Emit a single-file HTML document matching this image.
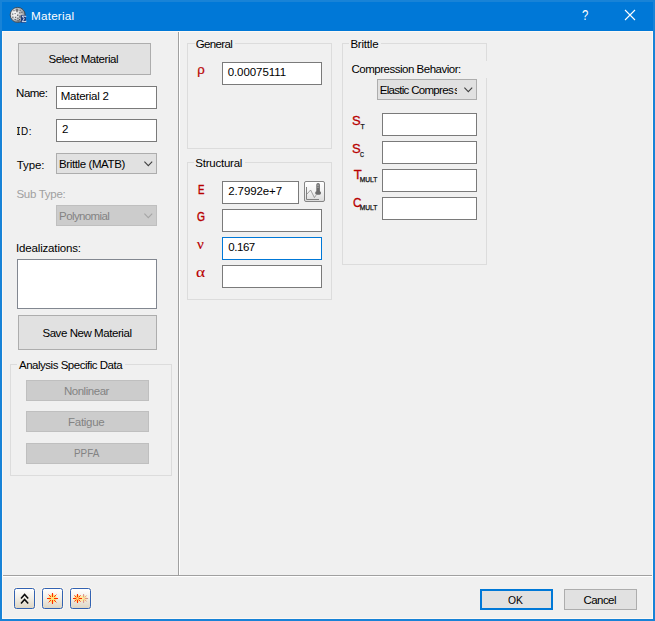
<!DOCTYPE html>
<html><head><meta charset="utf-8">
<style>
*{box-sizing:border-box;margin:0;padding:0}
html,body{width:655px;height:621px;overflow:hidden;background:#f0f0f0}
body{font-family:"Liberation Sans",sans-serif;font-size:11px;color:#000;position:relative}
.abs{position:absolute}
.tx{position:absolute;white-space:nowrap;line-height:14px;font-size:11px}
.btn{position:absolute;background:#e1e1e1;border:1px solid #adadad}
.btn.dis{background:#cccccc;border:1px solid #bfbfbf}
.inp{position:absolute;background:#fff;border:1px solid #7a7a7a}
.grp{position:absolute;border:1px solid #dcdcdc}
.red{color:#b80000}
.ib{position:absolute;width:21px;height:21px;border:1px solid #3262b2;border-radius:2.5px;background:linear-gradient(#ffffff 0%,#f3f0e9 45%,#ded6c4 100%);box-shadow:0 0 0 1px rgba(255,248,236,.7)}
</style></head><body>
<!-- window frame -->
<div class="abs" style="left:0;top:0;width:655px;height:621px;background:#1883d7"></div>
<div class="abs" style="left:2px;top:2px;width:651px;height:29px;background:#0078d7"></div>
<div class="abs" style="left:2px;top:31px;width:651px;height:588px;background:#fcf8f4"></div>
<div class="abs" style="left:3px;top:32px;width:649px;height:586px;background:#f0f0f0"></div>

<!-- title icon -->
<svg class="abs" style="left:9px;top:6px" width="19" height="19" viewBox="0 0 19 19">
 <defs><radialGradient id="sg" cx="30%" cy="42%" r="75%"><stop offset="0" stop-color="#ffffff"/><stop offset=".45" stop-color="#d4d6d8"/><stop offset=".8" stop-color="#9a9ea4"/><stop offset="1" stop-color="#50565e"/></radialGradient></defs>
 <circle cx="8.7" cy="8.9" r="7.5" fill="url(#sg)" stroke="#3c4650" stroke-width=".9"/>
 <g fill="#3c4046" opacity=".85">
  <rect x="7.4" y="2.6" width="1.2" height="3.6"/><rect x="6.4" y="3.6" width="3.2" height=".8"/>
  <rect x="4.4" y="4.2" width="1.2" height="1"/><rect x="10.6" y="3.8" width="1" height="1.4"/>
  <rect x="3" y="7.6" width="1.4" height="1"/><rect x="5.6" y="7" width="1" height="1.2"/>
  <rect x="10" y="6.4" width="1.6" height="1"/><rect x="12.4" y="5.6" width="1" height="1.4"/>
  <rect x="8" y="8.6" width="1.4" height="1.2"/><rect x="10.4" y="9.4" width="1.2" height="2.4"/>
  <rect x="3.4" y="10.6" width="1" height="1.6"/><rect x="6" y="10.8" width="1.2" height="1"/>
  <rect x="8.4" y="11.6" width="1" height="1.6"/><rect x="5.4" y="13.2" width="1.8" height="1"/>
  <rect x="7.6" y="14.4" width="2.4" height="1"/><rect x="10" y="13" width="1" height="1.4"/>
 </g>
 <rect x="11.9" y="9.2" width="5.1" height="7.5" fill="#1f3c7c"/>
 <path d="M13.2 10.2h3.6l0 .9M13.2 10.2l2 2.6-2 2.8h3.8l0-.9" fill="none" stroke="#eef4ff" stroke-width=".9"/>
</svg>
<!-- ? and X -->
<div class="tx" style="left:581.6px;top:6px;line-height:18px;font-size:14.2px;color:#fff;transform:scaleX(.8);transform-origin:0 0">?</div>
<svg class="abs" style="left:624px;top:9px" width="12" height="12" viewBox="0 0 12 12"><path d="M1 1l10 10M11 1L1 11" stroke="#fff" stroke-width="1.1" fill="none"/></svg>

<!-- separators -->
<div class="abs" style="left:178px;top:32px;width:1px;height:543px;background:#a0a0a0"></div>
<div class="abs" style="left:179px;top:32px;width:1px;height:543px;background:#ffffff"></div>
<div class="abs" style="left:3px;top:575px;width:649px;height:1px;background:#a0a0a0"></div>
<div class="abs" style="left:3px;top:576px;width:649px;height:1px;background:#ffffff"></div>

<!-- left panel -->
<div class="btn" style="left:18px;top:43px;width:133px;height:32px"></div>
<div class="inp" style="left:56px;top:86px;width:101px;height:23px"></div>
<div class="inp" style="left:56px;top:119px;width:101px;height:23px"></div>
<div class="btn" style="left:56px;top:153px;width:101px;height:21px"></div>
<svg class="abs" style="left:143px;top:160px" width="11" height="8" viewBox="0 0 11 8"><path d="M1.4 1.7l3.9 3.9 3.9-3.9" stroke="#404040" stroke-width="1.1" fill="none"/></svg>
<div class="btn dis" style="left:56px;top:205px;width:101px;height:21px"></div>
<svg class="abs" style="left:143px;top:212px" width="11" height="8" viewBox="0 0 11 8"><path d="M1.4 1.7l3.9 3.9 3.9-3.9" stroke="#a6a6a6" stroke-width="1.1" fill="none"/></svg>
<div class="inp" style="left:17px;top:259px;width:140px;height:50px;border-color:#828790"></div>
<div class="btn" style="left:18px;top:315px;width:139px;height:35px"></div>

<div class="grp" style="left:10px;top:364px;width:162px;height:112px"></div>
<div class="btn dis" style="left:26px;top:380px;width:123px;height:21px"></div>
<div class="btn dis" style="left:26px;top:411px;width:123px;height:21px"></div>
<div class="btn dis" style="left:26px;top:443px;width:123px;height:21px"></div>

<!-- General -->
<div class="grp" style="left:187px;top:43px;width:145px;height:106px"></div>
<div class="tx red" style="left:197.3px;top:61.6px;font-size:13.2px;line-height:16px;-webkit-text-stroke:0.2px #b80000">ρ</div>
<div class="inp" style="left:222px;top:62px;width:100px;height:23px"></div>

<!-- Structural -->
<div class="grp" style="left:187px;top:162px;width:145px;height:138px"></div>
<div class="tx red" style="left:197.9px;top:183px;font-size:12px;line-height:14px;-webkit-text-stroke:0.45px #b80000;transform:scaleX(.8);transform-origin:0 0">E</div>
<div class="inp" style="left:222px;top:181px;width:77px;height:23px"></div>
<div class="tx red" style="left:197.4px;top:210.4px;font-size:12px;line-height:14px;-webkit-text-stroke:0.45px #b80000;transform:scaleX(.85);transform-origin:0 0">G</div>
<div class="inp" style="left:222px;top:209px;width:100px;height:23px"></div>
<div class="tx red" style="left:197.1px;top:236px;font-size:15px;line-height:16px;font-family:'Liberation Serif',serif;-webkit-text-stroke:0.2px #b80000">ν</div>
<div class="inp" style="left:222px;top:237px;width:100px;height:23px;border-color:#0078d7"></div>
<div class="tx red" style="left:196.4px;top:264px;font-size:15px;line-height:16px;font-family:'Liberation Serif',serif;-webkit-text-stroke:0.12px #b80000;transform:scaleX(1.15);transform-origin:0 0">α</div>
<div class="inp" style="left:222px;top:265px;width:100px;height:23px"></div>
<!-- graph/thermo button -->
<div class="abs" style="left:304px;top:181px;width:21px;height:21px;border:1px solid #858585;border-radius:2px;background:linear-gradient(#ffffff,#f2f2f2 50%,#dcdcdc)"></div>
<svg class="abs" style="left:304px;top:181px" width="21" height="21" viewBox="0 0 21 21">
 <path d="M2.5 6v12.5h12.5" stroke="#808080" stroke-width="1" fill="none"/>
 <path d="M3 13l3.6-4 3.8 7.6 1.6-2.4" stroke="#8a8a8a" stroke-width=".8" fill="none"/>
 <rect x="12.3" y="2.1" width="3.6" height="10.5" rx="1.7" fill="#6c6c6c"/>
 <ellipse cx="14.1" cy="11.9" rx="2.9" ry="1.9" fill="#6c6c6c"/>
 <rect x="13.5" y="3.5" width="1" height="1.4" fill="#cfcfcf"/><rect x="13.5" y="5.6" width="1" height="1.4" fill="#b4b4b4"/>
</svg>

<!-- Brittle -->
<div class="grp" style="left:342px;top:43px;width:145px;height:222px"></div>
<div class="abs" style="left:350px;top:61px;width:140px;height:17px;background:#f0f0f0"></div>
<div class="btn" style="left:377px;top:79px;width:100px;height:21px"></div>
<div class="abs" style="left:377px;top:83px;width:80.1px;height:14px;overflow:hidden"><div class="tx" style="left:2.70px;top:0;font-size:11.5px;letter-spacing:-0.698px">Elastic Compres<span style="margin-left:1.3px">s</span></div></div>
<svg class="abs" style="left:463px;top:86px" width="11" height="8" viewBox="0 0 11 8"><path d="M1.4 1.7l3.9 3.9 3.9-3.9" stroke="#404040" stroke-width="1.1" fill="none"/></svg>
<div class="inp" style="left:382px;top:113px;width:95px;height:23px"></div>
<div class="inp" style="left:382px;top:141px;width:95px;height:23px"></div>
<div class="inp" style="left:382px;top:169px;width:95px;height:23px"></div>
<div class="inp" style="left:382px;top:197px;width:95px;height:23px"></div>
<div class="tx red" style="left:352.1px;top:113px;font-size:13px;line-height:16px;-webkit-text-stroke:0.3px #b80000">S</div>
<div class="tx" style="left:360.4px;top:121.5px;font-size:6.8px;line-height:10px;color:#111;-webkit-text-stroke:0.25px #111">T</div>
<div class="tx red" style="left:352.1px;top:141px;font-size:13px;line-height:16px;-webkit-text-stroke:0.3px #b80000">S</div>
<div class="tx" style="left:359.8px;top:149.5px;font-size:6.6px;line-height:10px;color:#111;-webkit-text-stroke:0.25px #111;transform:scaleX(.85);transform-origin:0 0">C</div>
<div class="tx red" style="left:353.8px;top:167px;font-size:13px;line-height:16px;-webkit-text-stroke:0.3px #b80000">T</div>
<div class="tx" style="left:359.7px;top:175px;font-size:6.7px;line-height:10px;color:#111;-webkit-text-stroke:0.25px #111;letter-spacing:-0.05px">MULT</div>
<div class="tx red" style="left:353px;top:195px;font-size:13px;line-height:16px;-webkit-text-stroke:0.3px #b80000;transform:scaleX(.9);transform-origin:0 0">C</div>
<div class="tx" style="left:359.7px;top:203px;font-size:6.7px;line-height:10px;color:#111;-webkit-text-stroke:0.25px #111;letter-spacing:-0.05px">MULT</div>

<!-- bottom left icon buttons -->
<div class="ib" style="left:14px;top:588px"></div>
<svg class="abs" style="left:14px;top:588px" width="21" height="21" viewBox="0 0 21 21">
 <path d="M7 10.5l3.6-4.1 3.6 4.1M7 15.6l3.6-4.1 3.6 4.1" stroke="#0a0a0a" stroke-width="1.5" fill="none"/>
</svg>
<div class="ib" style="left:42px;top:588px"></div>
<svg class="abs" style="left:42px;top:588px" width="21" height="21" viewBox="0 0 21 21">
 <circle cx="10.5" cy="10.5" r="4.2" fill="#ffe27a"/>
 <g stroke="#ff2a00" stroke-width="1.1" fill="none">
  <path d="M10.5 5v4M10.5 12v4M5 10.5h4M12 10.5h4"/>
  <path d="M6.6 6.6l2.4 2.4M14.4 6.6l-2.4 2.4M6.6 14.4l2.4-2.4M14.4 14.4l-2.4-2.4" stroke-width=".9"/>
 </g>
</svg>
<div class="ib" style="left:70px;top:588px"></div>
<svg class="abs" style="left:70px;top:588px" width="21" height="21" viewBox="0 0 21 21">
 <circle cx="7.5" cy="10.5" r="3.4" fill="#ffe27a"/>
 <circle cx="13.6" cy="10.5" r="3.2" fill="#ffeaa0"/>
 <g stroke="#ff2a00" stroke-width="1.1" fill="none">
  <path d="M7.5 6v3.3M7.5 11.7v3.3M3 10.5h3.3M8.7 10.5h3.3"/>
  <path d="M4.4 7.4l2 2M10.6 7.4l-2 2M4.4 13.6l2-2M10.6 13.6l-2-2" stroke-width=".9"/>
 </g>
 <g stroke="#d89090" stroke-width="1" fill="none">
  <path d="M13.6 6v3.3M13.6 11.7v3.3M14.8 10.5h3.3"/>
  <path d="M16.7 7.4l-2 2M16.7 13.6l-2-2" stroke-width=".8"/>
 </g>
</svg>

<!-- bottom buttons -->
<div class="btn" style="left:480px;top:589px;width:73px;height:21px;border:2px solid #0078d7"></div>
<div class="btn" style="left:564px;top:589px;width:73px;height:21px"></div>

<div class="tx" style="left:16.7px;top:124px;font-size:11.5px">I</div>
<div class="abs" style="left:16.8px;top:127px;width:3px;height:1px;background:#222"></div>
<div class="abs" style="left:16.8px;top:134px;width:3px;height:1px;background:#222"></div>
<div class="tx" style="left:20.6px;top:124px;font-size:11.5px;letter-spacing:0.6px;transform:scaleX(.86);transform-origin:0 0">D:</div>
<div class="tx" style="left:48.41px;top:52px;color:#000;font-size:11.5px;letter-spacing:-0.416px;">Select Material</div>
<div class="tx" style="left:16.10px;top:86px;color:#000;font-size:11.5px;letter-spacing:-0.504px;">Name:</div>
<div class="tx" style="left:60.80px;top:89px;color:#000;font-size:11.5px;letter-spacing:-0.276px;">Material 2</div>
<div class="tx" style="left:61.95px;top:122px;color:#000;font-size:11.5px;letter-spacing:0.000px;">2</div>
<div class="tx" style="left:16.71px;top:158px;color:#000;font-size:11.5px;letter-spacing:-0.070px;">Type:</div>
<div class="tx" style="left:59.10px;top:157px;color:#000;font-size:11.5px;letter-spacing:-0.397px;">Brittle (MATB)</div>
<div class="tx" style="left:16.41px;top:187px;color:#a0a0a0;font-size:11.5px;letter-spacing:-0.281px;">Sub Type:</div>
<div class="tx" style="left:59.10px;top:209px;color:#838383;font-size:11.5px;letter-spacing:-0.606px;">Polynomial</div>
<div class="tx" style="left:16.00px;top:241px;color:#000;font-size:11.5px;letter-spacing:-0.162px;">Idealizations:</div>
<div class="tx" style="left:42.41px;top:326px;color:#000;font-size:11.5px;letter-spacing:-0.433px;">Save New Material</div>
<div class="tx" style="left:19.01px;top:358px;color:#000;font-size:11.5px;letter-spacing:-0.487px;background:#f0f0f0;padding:0 3px 0 2px;margin-left:-2px;">Analysis Specific Data</div>
<div class="tx" style="left:63.90px;top:384px;color:#838383;font-size:11.5px;letter-spacing:-0.464px;">Nonlinear</div>
<div class="tx" style="left:68.00px;top:415px;color:#838383;font-size:11.5px;letter-spacing:-0.269px;">Fatigue</div>
<div class="tx" style="left:73.84px;top:446px;color:#838383;font-size:11.5px;transform:scaleX(0.8596);transform-origin:0 0;">PPFA</div>
<div class="tx" style="left:195.84px;top:37px;color:#000;font-size:11.5px;letter-spacing:-0.665px;background:#f0f0f0;padding:0 3px 0 1px;margin-left:-1px;">General</div>
<div class="tx" style="left:227.66px;top:65px;color:#000;font-size:11.5px;letter-spacing:-0.075px;">0.00075111</div>
<div class="tx" style="left:195.31px;top:156px;color:#000;font-size:11.5px;letter-spacing:-0.241px;background:#f0f0f0;padding:0 3px 0 1px;margin-left:-1px;">Structural</div>
<div class="tx" style="left:228.15px;top:184px;color:#000;font-size:11.5px;letter-spacing:-0.084px;">2.7992e+7</div>
<div class="tx" style="left:228.26px;top:240px;color:#000;font-size:11.5px;letter-spacing:-0.444px;">0.167</div>
<div class="tx" style="left:350.40px;top:37px;color:#000;font-size:11.5px;letter-spacing:-0.203px;background:#f0f0f0;padding:0 3px 0 1px;margin-left:-1px;">Brittle</div>
<div class="tx" style="left:351.54px;top:62px;color:#000;font-size:11.5px;letter-spacing:-0.488px;">Compression Behavior:</div>
<div class="tx" style="left:508.22px;top:593px;color:#000;font-size:11.5px;transform:scaleX(0.8985);transform-origin:0 0;">OK</div>
<div class="tx" style="left:583.44px;top:593px;color:#000;font-size:11.5px;letter-spacing:-0.552px;">Cancel</div>
<div class="tx" style="left:31.10px;top:8px;color:#fff;font-size:11.7px;letter-spacing:0.189px;line-height:16px;">Material</div>
</body></html>
